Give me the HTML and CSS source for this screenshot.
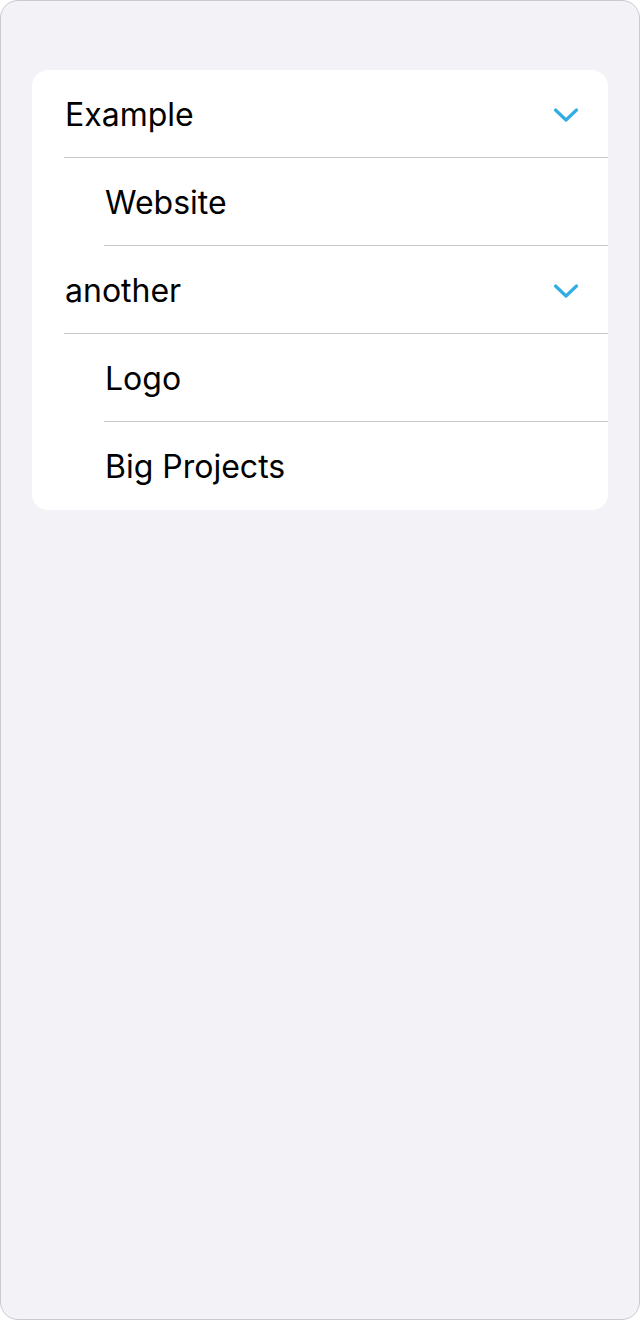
FILE: index.html
```html
<!DOCTYPE html>
<html>
<head>
<meta charset="utf-8">
<link rel="stylesheet" href="styles.css">
</head>
<body>
<div class="screen">
  <div class="card">
    <div class="row parent">
      <span class="label">Example</span>
      <svg class="chev" width="26" height="16" viewBox="0 0 26 16"><path d="M2.5 3 L13 13 L23.5 3" fill="none" stroke="#32ade6" stroke-width="3.2" stroke-linecap="round" stroke-linejoin="round"/></svg>
    </div>
    <div class="row child">
      <span class="label">Website</span>
    </div>
    <div class="row parent">
      <span class="label">another</span>
      <svg class="chev" width="26" height="16" viewBox="0 0 26 16"><path d="M2.5 3 L13 13 L23.5 3" fill="none" stroke="#32ade6" stroke-width="3.2" stroke-linecap="round" stroke-linejoin="round"/></svg>
    </div>
    <div class="row child">
      <span class="label">Logo</span>
    </div>
    <div class="row child last">
      <span class="label">Big Projects</span>
    </div>
  </div>
</div>
</body>
</html>
```

FILE: styles.css
```css
html, body {
  margin: 0;
  padding: 0;
  background: #ffffff;
}
.screen {
  box-sizing: border-box;
  width: 640px;
  height: 1320px;
  background: #f2f2f7;
  border: 1px solid #c9c9ce;
  border-radius: 18px;
  padding: 69px 31px 0 31px;
  font-family: Inter, "Noto Sans", sans-serif;
}
.card {
  background: #ffffff;
  border-radius: 16px;
  overflow: hidden;
}
.row {
  height: 88px;
  display: flex;
  align-items: center;
  justify-content: space-between;
  box-sizing: border-box;
  position: relative;
  padding-right: 29px;
}
.row::after {
  content: "";
  position: absolute;
  right: 0;
  bottom: 0;
  height: 1px;
  background: #c8c8cb;
}
.parent { padding-left: 33px; }
.parent::after { left: 32px; }
.child { padding-left: 73px; }
.child::after { left: 72px; }
.last::after { display: none; }
.label {
  font-size: 32px;
  color: #000000;
  letter-spacing: 0;
}
.chev {
  display: block;
  margin-top: 2px;
}
```
